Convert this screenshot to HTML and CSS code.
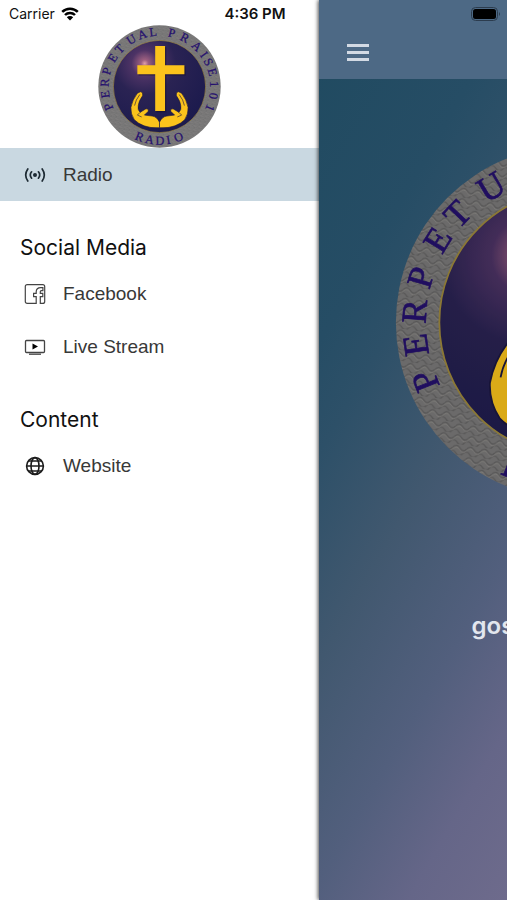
FILE: index.html
```html
<!DOCTYPE html>
<html lang="en">
<head>
  <meta charset="UTF-8" />
  <meta name="viewport" content="width=device-width, initial-scale=1.0"/>
  <title>Perpetual Praise 101 Radio</title>
  <link rel="stylesheet" href="styles.css">
</head>
<body>
  <!-- station logo, used in the menu and in the player -->
  <svg class="sprite" width="0" height="0" aria-hidden="true">
    <defs>
      <pattern id="stone" width="16" height="12" patternUnits="userSpaceOnUse" patternTransform="rotate(8)">
        <rect width="16" height="12" fill="#7b7a7a"/>
        <path d="M0 4q4-5 8 0t8 0M-4 10q4-5 8 0t8 0t8 0" fill="none" stroke="#666565" stroke-width="1.6"/>
        <path d="M0 6q4-5 8 0t8 0" fill="none" stroke="#8f8c89" stroke-width="1"/>
      </pattern>
      <radialGradient id="sky" cx="0.34" cy="0.25" r="0.8">
        <stop offset="0" stop-color="#e0a0a8"/>
        <stop offset="0.05" stop-color="#9c5f80"/>
        <stop offset="0.18" stop-color="#4d3365"/>
        <stop offset="0.42" stop-color="#2a2353"/>
        <stop offset="1" stop-color="#1b1a4d"/>
      </radialGradient>
      <path id="arc-top" d="M54.3 277.5A165 165 0 1 1 345.7 277.5"/>
      <path id="arc-bottom" d="M105.5 363.7A189 189 0 0 0 294.5 363.7"/>
      <symbol id="logo" viewBox="0 0 400 400">
        <circle cx="200" cy="200" r="199" fill="url(#stone)"/>
        <circle cx="200" cy="200" r="150" fill="url(#sky)" stroke="#a08a3c" stroke-width="2"/>
        <g font-family="Liberation Serif, serif" font-size="40" fill="#25106e" stroke="#25106e" stroke-width="0.8">
          <text x="7 45 79 117 159 193 236 272 308 345 366 405 448 489 511 542 575 581 617 655"><textPath href="#arc-top">PERPETUAL PRAISE 101</textPath></text>
          <text x="14 50 86 123 152"><textPath href="#arc-bottom">RADIO</textPath></text>
        </g>
        <path d="M190 72h32v62h63v30h-63v120h-32V164h-58v-30h58z" fill="#15102e" opacity="0.6"/>
        <path d="M186 68h32v63h63v29h-63v120h-32V160h-58v-29h58z" fill="#fbc31c"/>
        <g fill="#fbc31c" stroke="#1b1740" stroke-width="2" stroke-linejoin="round">
          <path id="hand" d="M200 316C194 304 186 297 176 296L151 293L163 281Q166 271 155 273L137 284Q128 276 131 262Q132 248 145 230Q148 218 138 217L128 222Q112 242 107 268Q106 290 118 308Q132 322 150 328Q170 336 200 334Z"/>
          <path d="M119 262Q122 244 136 226M137 284L128 293L142 299" fill="none"/>
          <g transform="matrix(-1 0 0 1 400 0)">
            <use href="#hand"/>
            <path d="M119 262Q122 244 136 226M137 284L128 293L142 299" fill="none"/>
          </g>
        </g>
      </symbol>
    </defs>
  </svg>

  <div class="status-bar">
    <span class="carrier">Carrier
      <svg width="18" height="14" viewBox="0 0 18 14" aria-hidden="true">
        <path d="M1.2 4.9A11 11 0 0 1 16.8 4.9M4 8A7 7 0 0 1 14 8" fill="none" stroke="#000" stroke-width="2.5"/>
        <path d="M9 13.6L5.8 10.3A4.6 4.6 0 0 1 12.2 10.3Z"/>
      </svg>
    </span>
    <span class="time">4:36 PM</span>
    <svg class="battery" width="30" height="14" viewBox="0 0 30 14" aria-hidden="true">
      <rect x="0.5" y="0.5" width="26" height="13" rx="4" fill="none" stroke="#2c3c4e"/>
      <rect x="2" y="2" width="23" height="10" rx="2.5"/>
      <path d="M28 5v4q2-2 0-4z" fill="#2c3c4e"/>
    </svg>
  </div>

  <div class="app">
    <nav class="drawer">
      <svg class="drawer-logo" role="img" aria-label="Perpetual Praise 101 Radio"><use href="#logo"/></svg>

      <a class="item active" href="#radio">
        <svg width="22" height="22" viewBox="0 0 22 22" fill="none" stroke="#1d2a33" stroke-width="1.7" stroke-linecap="round">
          <circle cx="11" cy="11" r="2" fill="#1d2a33" stroke="none"/>
          <path d="M7.6 7.8a5 5 0 0 0 0 6.4M14.4 7.8a5 5 0 0 1 0 6.4M3.8 5Q-.4 11 3.8 17M18.2 5Q22.4 11 18.2 17"/>
        </svg>
        Radio
      </a>

      <h2>Social Media</h2>
      <a class="item" href="#facebook">
        <svg width="22" height="22" viewBox="0 0 22 22" fill="none" stroke="#444" stroke-width="1.2">
          <path d="M12.2 20.4H3.3Q1.3 20.4 1.3 18.4V3.6Q1.3 1.6 3.3 1.6H18.7Q20.7 1.6 20.7 3.6V18.4Q20.7 20.4 18.7 20.4H16.3V13.6H18.8V10.4H16.3V8.7Q16.3 7.7 17.4 7.7H18.9V4.7H16.8Q12.2 4.8 12.2 8.8V10.4H9.6V13.6H12.2Z"/>
        </svg>
        Facebook
      </a>
      <a class="item" href="#live">
        <svg width="22" height="22" viewBox="0 0 22 22" fill="none" stroke="#444" stroke-width="1.3">
          <rect x="1.5" y="4.5" width="19" height="12" rx="1"/>
          <path d="M5 18.2h12"/>
          <path d="M8.5 7.5v6l5.5-3z" fill="#000" stroke="none"/>
        </svg>
        Live Stream
      </a>

      <h2>Content</h2>
      <a class="item" href="#website">
        <svg width="22" height="22" viewBox="0 0 22 22" fill="none" stroke="#1c1c1c" stroke-width="1.6">
          <circle cx="11" cy="11" r="8.4"/>
          <ellipse cx="11" cy="11" rx="4" ry="8.4"/>
          <path d="M2.6 11h16.8M4.5 6h13M4.5 16h13" stroke-width="1.3"/>
        </svg>
        Website
      </a>
    </nav>

    <main class="main">
      <div class="player">
        <header class="topbar">
          <button class="menu" aria-label="Menu"><span></span><span></span><span></span></button>
        </header>
        <svg class="player-logo" viewBox="0 0 400 400" role="img" aria-label="Perpetual Praise 101 Radio"><use href="#logo"/></svg>
        <p class="station">gos</p>
      </div>
    </main>
  </div>
</body>
</html>
```

FILE: styles.css
```css
* {
  margin: 0;
  padding: 0;
  box-sizing: border-box;
}

body {
  background: #fff;
  color: #111;
  font-family: Inter, "Liberation Sans", sans-serif;
}

.sprite {
  position: absolute;
}

/* the status bar lies over both the menu and the player */
.status-bar {
  position: absolute;
  top: 0;
  left: 0;
  right: 0;
  z-index: 3;
  display: grid;
  grid-template-columns: 1fr auto 1fr;
  align-items: center;
  height: 27px;
  padding: 0 6px 0 9px;
  font-size: 14px;
}

.carrier {
  display: flex;
  align-items: center;
  gap: 6px;
}

.time {
  font-size: 15px;
  font-weight: 600;
}

.battery {
  justify-self: end;
}

.app {
  display: flex;
  min-height: 100vh;
}

.drawer {
  width: 63%;
  padding-top: 25px;
  display: flex;
  flex-direction: column;
}

.drawer-logo {
  width: 123px;
  height: 123px;
  align-self: center;
}

.drawer h2 {
  padding: 28px 20px 0;
  font-size: 21px;
  line-height: 38px;
  font-weight: 400;
}

.item {
  display: flex;
  align-items: center;
  gap: 17px;
  height: 53px;
  padding: 0 24px;
  color: #383838;
  font-family: "Liberation Sans", Arial, sans-serif;
  font-size: 19px;
  font-weight: 300;
  text-decoration: none;
}

.item.active {
  background: #c9d8e1;
}

.main {
  position: relative;
  z-index: 1;
  flex: 1;
  min-width: 0;
  overflow: hidden;
  background: linear-gradient(120deg, #1f4a60 0%, #264d65 28%, #2d5068 37%, #41586f 54%, #525f7d 72%, #656688 86%, #6e6b8c 100%);
  box-shadow: -1px 0 4px rgba(0, 0, 0, 0.7);
}

/* the player keeps the full screen width while the menu is open */
.player {
  width: 100vw;
  display: flex;
  flex-direction: column;
  align-items: center;
}

.topbar {
  width: 100%;
  height: 79px;
  padding: 27px 19px 0;
  background: #4d6985;
}

.menu {
  display: flex;
  flex-direction: column;
  justify-content: center;
  gap: 4px;
  width: 40px;
  height: 50px;
  padding: 0 9px;
  border: none;
  background: none;
  cursor: pointer;
}

.menu span {
  height: 3px;
  background: #d3dae4;
}

.player-logo {
  width: 70%;
  margin-top: 66px;
  filter: brightness(0.87);
}

.station {
  width: 100%;
  margin-top: 110px;
  padding-left: 30%;
  color: #e2e6ee;
  font-size: 24px;
  line-height: 32px;
  font-weight: 600;
}
```
